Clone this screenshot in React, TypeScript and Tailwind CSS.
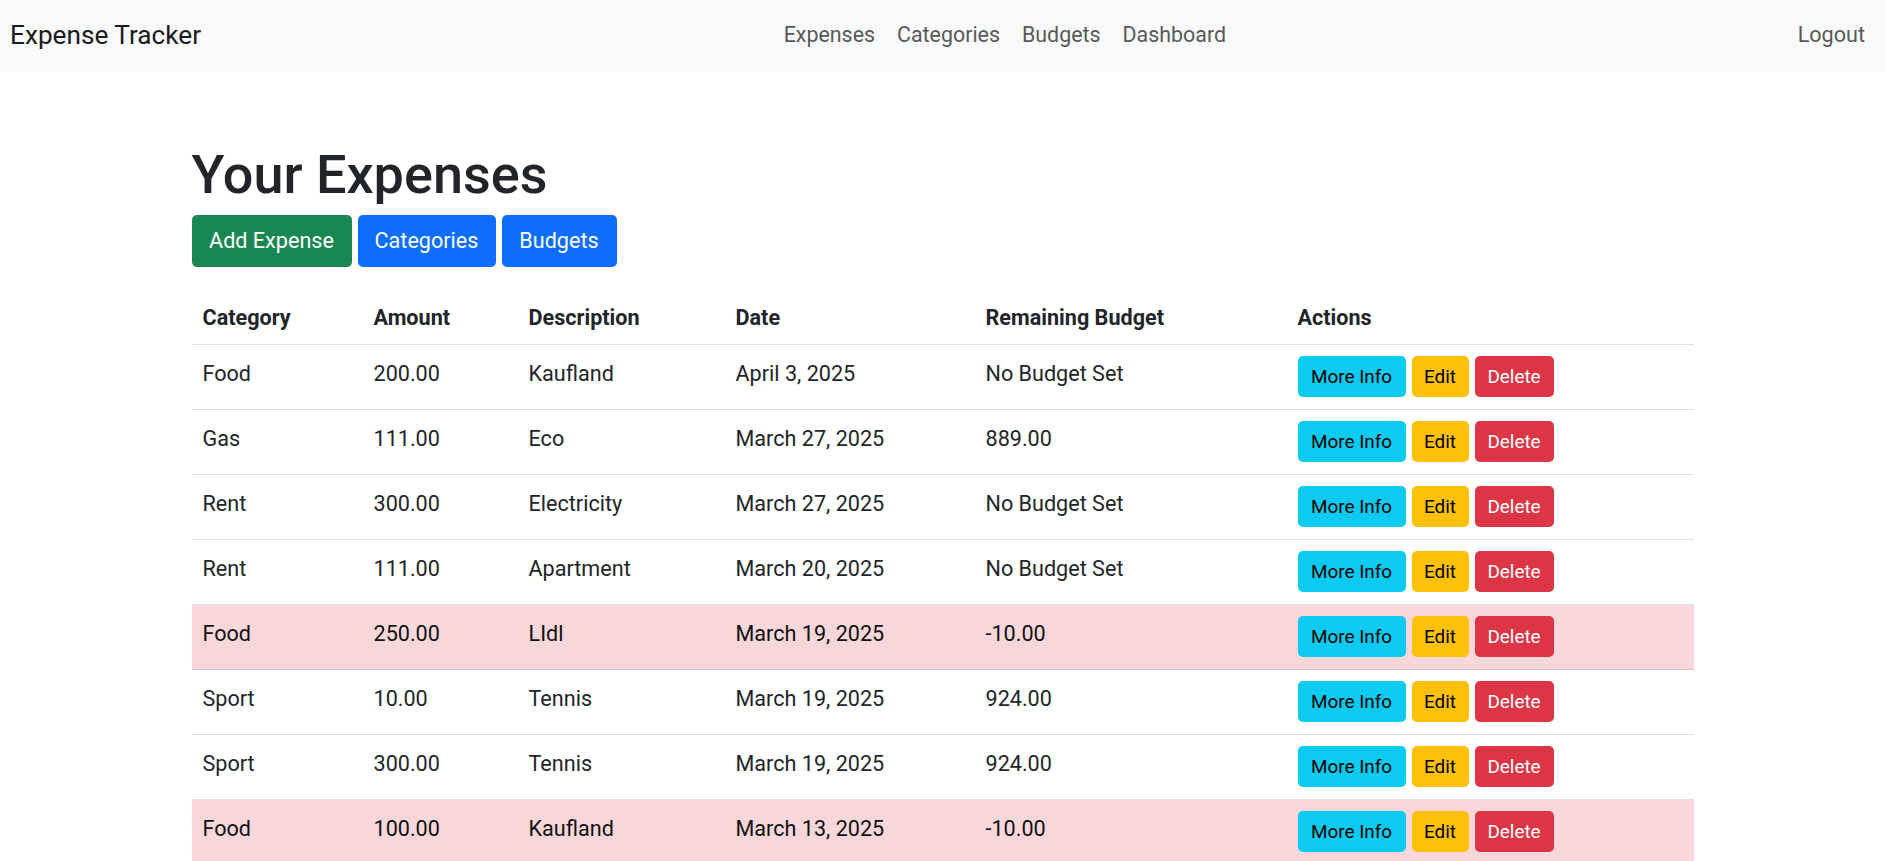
import React from "react";

type Expense = {
  category: string;
  amount: string;
  description: string;
  date: string;
  remaining: string;
  over?: boolean;
};

const expenses: Expense[] = [
  { category: "Food", amount: "200.00", description: "Kaufland", date: "April 3, 2025", remaining: "No Budget Set" },
  { category: "Gas", amount: "111.00", description: "Eco", date: "March 27, 2025", remaining: "889.00" },
  { category: "Rent", amount: "300.00", description: "Electricity", date: "March 27, 2025", remaining: "No Budget Set" },
  { category: "Rent", amount: "111.00", description: "Apartment", date: "March 20, 2025", remaining: "No Budget Set" },
  { category: "Food", amount: "250.00", description: "LIdl", date: "March 19, 2025", remaining: "-10.00", over: true },
  { category: "Sport", amount: "10.00", description: "Tennis", date: "March 19, 2025", remaining: "924.00" },
  { category: "Sport", amount: "300.00", description: "Tennis", date: "March 19, 2025", remaining: "924.00" },
  { category: "Food", amount: "100.00", description: "Kaufland", date: "March 13, 2025", remaining: "-10.00", over: true },
];

const headers = ["Category", "Amount", "Description", "Date", "Remaining Budget", "Actions"];
const widths = ["w-[171px]", "w-[155px]", "w-[207px]", "w-[250px]", "w-[312px]", "w-[407px]"];

const Navbar = () => (
  <nav className="h-[72px] bg-[#f8f9fa] flex items-center pl-[10px] pr-[9px]">
    <a className="text-[26.2px] leading-[36px] text-[#1a1a1a] mr-[22px] mb-[2px]">Expense Tracker</a>
    <ul className="flex mx-auto mb-[2px]">
      {["Expenses", "Categories", "Budgets", "Dashboard"].map((l) => (
        <li key={l}>
          <a className="block px-[11px] text-[21.4px] leading-[32px] text-[#595959]">{l}</a>
        </li>
      ))}
    </ul>
    <a className="block px-[11px] text-[21.6px] leading-[32px] text-[#595959] mb-[2px]">Logout</a>
  </nav>
);

const ActionButtons = () => (
  <div className="flex gap-[6px]">
    <button className="w-[108px] h-[41px] rounded-[5px] bg-[#0dcaf0] text-black text-[18.9px]">More Info</button>
    <button className="w-[57px] h-[41px] rounded-[5px] bg-[#ffc107] text-black text-[18.9px]">Edit</button>
    <button className="w-[79px] h-[41px] rounded-[5px] bg-[#dc3545] text-white text-[18.9px]">Delete</button>
  </div>
);

export default function App() {
  return (
    <div className="min-h-screen bg-white font-['Roboto',sans-serif] text-[#212529]">
      <Navbar />
      <main className="w-[1502px] mx-auto pt-[70px]">
        <h1 className="text-[54px] leading-[65px] font-medium mb-[8px]">Your Expenses</h1>
        <div className="flex gap-[6px] mb-[23px]">
          <button className="w-[160px] h-[52px] rounded-[5px] bg-[#198754] text-white text-[21.6px]">Add Expense</button>
          <button className="w-[138px] h-[52px] rounded-[5px] bg-[#0d6efd] text-white text-[21.6px]">Categories</button>
          <button className="w-[115px] h-[52px] rounded-[5px] bg-[#0d6efd] text-white text-[21.6px]">Budgets</button>
        </div>
        <table className="w-full border-collapse text-[21.6px] leading-[32.4px] align-top">
          <thead>
            <tr className="border-b border-[#dee2e6]">
              {headers.map((h, i) => (
                <th key={h} className={`${widths[i]} text-left font-bold px-[11px] pt-[12px] pb-[10px] align-top`}>
                  {h}
                </th>
              ))}
            </tr>
          </thead>
          <tbody>
            {expenses.map((e, i) => {
              const base = e.over ? "bg-[#f8d7da] text-[#111] " : "";
              const cell = base + "px-[11px] pt-[13px] pb-[9px] align-top";
              const actionCell = base + "px-[11px] pt-[11px] pb-[11px] align-top";
              return (
                <tr
                  key={i}
                  className={e.over ? "h-[65px] border-b border-[#dcc3c5]" : "h-[65px] border-b border-[#dee2e6]"}
                >
                  <td className={cell}>{e.category}</td>
                  <td className={cell}>{e.amount}</td>
                  <td className={cell}>{e.description}</td>
                  <td className={cell}>{e.date}</td>
                  <td className={cell}>{e.remaining}</td>
                  <td className={actionCell}>
                    <ActionButtons />
                  </td>
                </tr>
              );
            })}
          </tbody>
        </table>
      </main>
    </div>
  );
}
